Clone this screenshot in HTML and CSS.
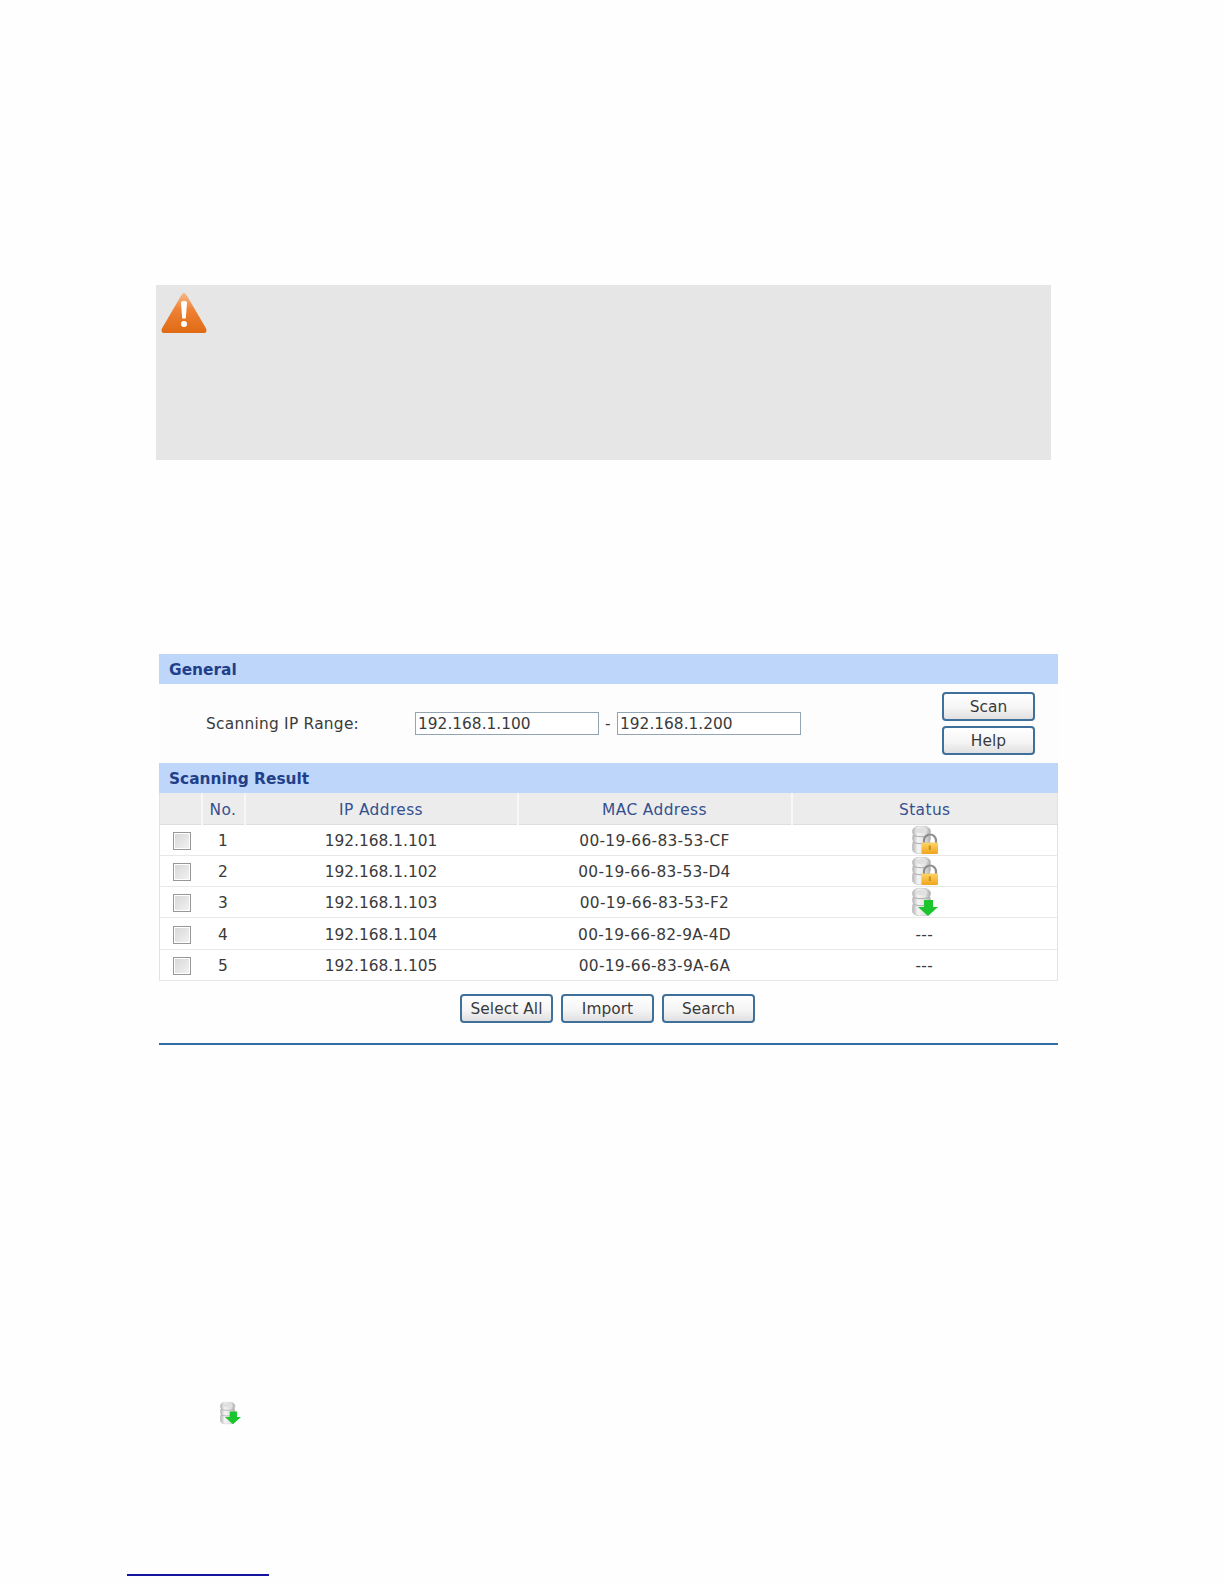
FILE: index.html
```html
<!DOCTYPE html>
<html lang="en">
<head>
<meta charset="utf-8">
<title>Scanning</title>
<link rel="stylesheet" href="styles.css">
</head>
<body>
<svg class="defs" width="0" height="0" aria-hidden="true">
  <defs>
    <linearGradient id="tri" x1="0" y1="0" x2="0" y2="1">
      <stop offset="0" stop-color="#f5b98a"/><stop offset=".4" stop-color="#ef8236"/><stop offset="1" stop-color="#df6a14"/>
    </linearGradient>
    <linearGradient id="disk" x1="0" y1="0" x2="1" y2="0">
      <stop offset="0" stop-color="#b4b4b4"/><stop offset=".3" stop-color="#f5f5f5"/><stop offset=".7" stop-color="#e2e2e2"/><stop offset="1" stop-color="#ababab"/>
    </linearGradient>
    <linearGradient id="gold" x1="0" y1="0" x2="0" y2="1">
      <stop offset="0" stop-color="#fbd568"/><stop offset="1" stop-color="#f0a51c"/>
    </linearGradient>
    <symbol id="db" viewBox="0 0 26 28">
      <path d="M0.500 5c0-3 4-5 9-5s9 2 9 5c0 1.500-.4 2.500-.8 3.500.5 1 .8 2.200.8 3.500s-.4 2.500-.8 3.500c.5 1 .8 2.200.8 3.500v4.500c0 2.600-4 4.500-9 4.500s-9-1.900-9-4.500V19c0-1.300.3-2.500.8-3.500C.8 14.500.5 13.300.5 12s.3-2.500.8-3.500C.8 7.500.5 6.500.5 5z" fill="url(#disk)" stroke="#b8b8b8" stroke-width=".6"/>
      <ellipse cx="9.500" cy="4.500" rx="6" ry="2.800" fill="#e0e0e0"/>
      <path d="M1.500 9c1.500 2.200 14.500 2.200 16 0M1.500 16c1.500 2.200 14.500 2.200 16 0" fill="none" stroke="#ababab" stroke-width="1"/>
    </symbol>
    <symbol id="locked" viewBox="0 0 26 28">
      <use href="#db" width="26" height="28"/>
      <path d="M12 17.500v-3a6 6 0 0 1 12 0v3" fill="none" stroke="#8c8c8c" stroke-width="2.200"/>
      <rect x="9.500" y="16.500" width="16.500" height="11.500" rx="1" fill="url(#gold)"/>
      <rect x="16.800" y="19.500" width="2" height="4.500" fill="#c98f1c"/>
    </symbol>
    <symbol id="down" viewBox="0 0 26 28">
      <use href="#db" width="26" height="28"/>
      <path d="M12 12h9v7h5L16 28 6 19h6z" fill="#1cc52e"/>
    </symbol>
  </defs>
</svg>

<section class="warning">
  <svg class="warn-icon" viewBox="0 0 46 40" width="46" height="40" aria-hidden="true">
    <path d="M23 0c1.200 0 2 1 2.800 2.500L44.800 35c1.500 2.800.5 5-2.500 5H3.700c-3 0-4-2.200-2.500-5L20.200 2.500C21 1 21.800 0 23 0z" fill="url(#tri)"/>
    <path d="M20 9.500c0-1 1-1.500 3-1.500s3 .5 3 1.500L24.800 25.500h-3.600z" fill="#fff"/>
    <circle cx="23" cy="31" r="3" fill="#fff"/>
  </svg>
</section>

<section class="panel">
  <h2 class="bar">General</h2>
  <form class="range">
    <label class="range-label" for="ip-from">Scanning IP Range:</label>
    <input class="field" id="ip-from" type="text" value="192.168.1.100">
    <span class="dash">-</span>
    <input class="field" id="ip-to" type="text" value="192.168.1.200">
    <div class="stack">
      <button class="btn" type="button">Scan</button>
      <button class="btn" type="button">Help</button>
    </div>
  </form>

  <h2 class="bar">Scanning Result</h2>
  <table class="results">
    <colgroup>
      <col class="c-check"><col class="c-no"><col class="c-ip"><col class="c-mac"><col class="c-status">
    </colgroup>
    <thead>
      <tr><th></th><th>No.</th><th>IP Address</th><th>MAC Address</th><th>Status</th></tr>
    </thead>
    <tbody>
      <tr><td><input class="check" type="checkbox"></td><td>1</td><td class="ip">192.168.1.101</td><td>00-19-66-83-53-CF</td><td><svg class="status-icon"><use href="#locked"/></svg></td></tr>
      <tr><td><input class="check" type="checkbox"></td><td>2</td><td class="ip">192.168.1.102</td><td>00-19-66-83-53-D4</td><td><svg class="status-icon"><use href="#locked"/></svg></td></tr>
      <tr><td><input class="check" type="checkbox"></td><td>3</td><td class="ip">192.168.1.103</td><td>00-19-66-83-53-F2</td><td><svg class="status-icon"><use href="#down"/></svg></td></tr>
      <tr><td><input class="check" type="checkbox"></td><td>4</td><td class="ip">192.168.1.104</td><td>00-19-66-82-9A-4D</td><td>---</td></tr>
      <tr><td><input class="check" type="checkbox"></td><td>5</td><td class="ip">192.168.1.105</td><td>00-19-66-83-9A-6A</td><td>---</td></tr>
    </tbody>
  </table>
  <div class="actions">
    <button class="btn" type="button">Select All</button>
    <button class="btn" type="button">Import</button>
    <button class="btn" type="button">Search</button>
  </div>
</section>

<svg class="legend-icon" aria-hidden="true"><use href="#down"/></svg>
<div class="footnote-rule"></div>
</body>
</html>
```
FILE: styles.css
```css
* { box-sizing: border-box; }

html, body { margin: 0; }

body {
  width: 1224px;
  height: 1584px;
  overflow: hidden;
  background: #fefefe;
  color: #3a3a3a;
  font-family: "DejaVu Sans", Verdana, sans-serif;
  font-size: 15.4px;
  letter-spacing: .25px;
  padding-top: 285px;
}

.defs { display: block; height: 0; }

.warning {
  width: 895px;
  height: 175px;
  margin-left: 156px;
  padding: 8px 0 0 5px;
  background: #e6e6e6;
}

.warn-icon { display: block; }

.panel {
  width: 899px;
  height: 391px;
  margin: 194px 0 0 159px;
  border-bottom: 2px solid #2f6fa5;
}

.bar {
  height: 30px;
  margin: 0;
  padding-left: 10px;
  background: #bfd6fb;
  color: #1f4088;
  font-size: 15.4px;
  font-weight: bold;
  letter-spacing: 0;
  line-height: 33px;
}

.range {
  display: flex;
  align-items: center;
  height: 79px;
  padding: 0 23px 0 47px;
  background: #fdfdfd;
}

.range-label { width: 209px; }

.field {
  width: 184px;
  height: 23px;
  padding: 0 2px;
  border: 1px solid #93a5b2;
  background: #fff;
  color: #3a3a3a;
  font: inherit;
  letter-spacing: 0;
}

.dash { width: 18px; text-align: center; }

.stack {
  display: flex;
  flex-direction: column;
  gap: 5px;
  margin-left: auto;
}

.btn {
  width: 93px;
  height: 29px;
  padding: 1px 0 0;
  border: 2px solid #3f709c;
  border-radius: 4px;
  background: linear-gradient(#ffffff, #f5f5f5 55%, #e0e0e0);
  color: #3a3a3a;
  font: inherit;
  letter-spacing: .05px;
}

.results {
  width: 100%;
  table-layout: fixed;
  border-collapse: collapse;
  border: 1px solid #e2e2e2;
  border-top: 0;
}

.c-check { width: 42px; }
.c-no { width: 43px; }
.c-ip { width: 273px; }
.c-mac { width: 274px; }

.results th {
  height: 31px;
  padding: 4px 0 0;
  background: #ececec;
  border-left: 2px solid #f7f7f7;
  border-bottom: 1px solid #dedede;
  color: #35508f;
  font-weight: normal;
  letter-spacing: .4px;
  text-align: center;
}

.results th:first-child { border-left: 0; }

.results td {
  height: 31.3px;
  padding: 2px 0 0;
  background: #fff;
  border-bottom: 1px solid #e8e8e8;
  letter-spacing: .3px;
  text-align: center;
}

.results .ip { letter-spacing: 0; }

.check {
  appearance: none;
  display: block;
  width: 18px;
  height: 18px;
  margin: 0 0 0 13px;
  border: 1px solid #979797;
  background: linear-gradient(135deg, #d6d6d6, #f3f3f3);
  box-shadow: inset 0 0 0 1px #fff;
}

.status-icon {
  display: block;
  width: 26px;
  height: 28px;
  margin: -2px 0 0 calc(50% - 12px);
  filter: blur(.3px);
}

.actions {
  display: flex;
  justify-content: center;
  gap: 8px;
  padding: 13px 2px 0 0;
}

.legend-icon {
  display: block;
  width: 21px;
  height: 24px;
  margin: 356px 0 0 220px;
  filter: blur(.3px);
}

.footnote-rule {
  width: 142px;
  height: 2px;
  margin: 149px 0 0 127px;
  background: #1414a0;
}
```
